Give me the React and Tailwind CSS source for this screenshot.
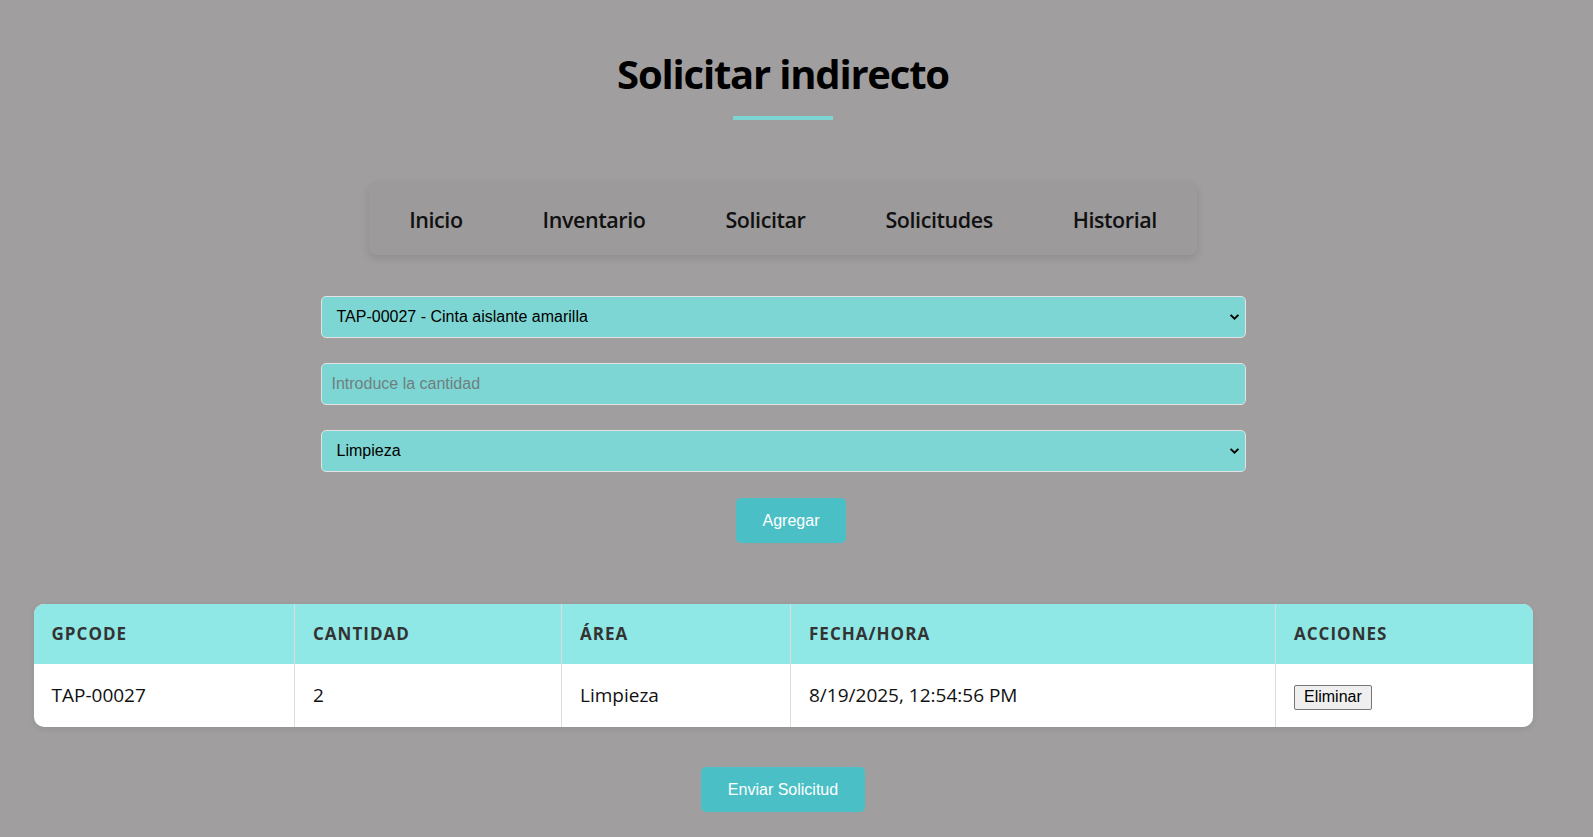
const NAV = ['Inicio', 'Inventario', 'Solicitar', 'Solicitudes', 'Historial'];

const ROWS = [
  { gpcode: 'TAP-00027', cantidad: 2, area: 'Limpieza', fecha: '8/19/2025, 12:54:56 PM' },
];

function Chevron() {
  return (
    <svg viewBox="0 0 12 8" className="absolute right-[5px] top-1/2 -translate-y-1/2 w-[11px] h-[7px]" fill="none">
      <path d="M1.5 1.5 L6 6 L10.5 1.5" stroke="#000" strokeWidth="2.2" />
    </svg>
  );
}

function Select({ value }) {
  return (
    <div className="relative w-full h-[42px] rounded-[5px] border border-[#e2e2e2] bg-[#7dd6d3] flex items-center pl-[15px] pr-10">
      <span className="text-[16px] text-black">{value}</span>
      <Chevron />
    </div>
  );
}

export default function App() {
  return (
    <div className="min-h-screen w-full bg-[#a09e9f] font-['Open_Sans',sans-serif]">
      <div className="w-[1566px] flex flex-col items-center pt-[50px] pb-6">
        {/* Encabezado */}
        <h1 className="text-[40px] leading-[48px] font-bold text-black tracking-[-0.03em]">Solicitar indirecto</h1>
        <div className="mt-[18px] w-[100px] h-[4px] bg-[#7dd6d3]" />

        {/* Navegación */}
        <nav className="mt-[63px] flex h-[72px] items-center rounded-lg bg-[#9c9a9b] shadow-[0_3px_8px_rgba(0,0,0,0.12)]">
          {NAV.map((item) => (
            <a key={item} href="#" className="px-10 pt-[3px] text-[21.5px] font-semibold text-[#111] tracking-[-0.02em]">
              {item}
            </a>
          ))}
        </nav>

        {/* Formulario */}
        <div className="mt-[41px] w-[925px] flex flex-col gap-[25px] font-['Liberation_Sans',Arial,sans-serif]">
          <Select value="TAP-00027 - Cinta aislante amarilla" />
          <input
            type="text"
            placeholder="Introduce la cantidad"
            className="w-full h-[42px] rounded-[5px] border border-[#e2e2e2] bg-[#7dd6d3] px-[10px] text-[16px] text-black placeholder:text-[#6f7f80] outline-none"
          />
          <Select value="Limpieza" />
        </div>

        <button className="mt-[26px] ml-4 h-[45px] w-[110px] rounded-[5px] bg-[#4bbfc6] text-white text-[16px] font-['Liberation_Sans',Arial,sans-serif]">
          Agregar
        </button>

        {/* Tabla */}
        <div className="mt-[61px] w-[1499px] rounded-[10px] overflow-hidden bg-white shadow-[0_2px_6px_rgba(0,0,0,0.08)]">
          <table className="w-full table-fixed border-collapse">
            <colgroup>
              <col className="w-[261px]" />
              <col className="w-[267px]" />
              <col className="w-[229px]" />
              <col className="w-[485px]" />
              <col className="w-[257px]" />
            </colgroup>
            <thead>
              <tr className="bg-[#8fe8e5] h-[60px]">
                {['GPCODE', 'CANTIDAD', 'ÁREA', 'FECHA/HORA', 'ACCIONES'].map((h, i) => (
                  <th
                    key={h}
                    className={`text-left px-[18px] text-[17px] font-bold text-[#333] tracking-[0.06em] ${i > 0 ? 'border-l border-[#dcdcdc]' : ''}`}
                  >
                    {h}
                  </th>
                ))}
              </tr>
            </thead>
            <tbody>
              {ROWS.map((r) => (
                <tr key={r.gpcode} className="h-[63px] text-[19px] text-[#111]">
                  <td className="px-[18px]">{r.gpcode}</td>
                  <td className="px-[18px] border-l border-[#dcdcdc]">{r.cantidad}</td>
                  <td className="px-[18px] border-l border-[#dcdcdc]">{r.area}</td>
                  <td className="px-[18px] border-l border-[#dcdcdc]">{r.fecha}</td>
                  <td className="px-[18px] border-l border-[#dcdcdc]">
                    <button className="h-[25px] px-[9px] rounded-[2px] border border-[#767676] bg-[#efefef] text-[16px] text-black leading-none font-['Liberation_Sans',Arial,sans-serif]">
                      Eliminar
                    </button>
                  </td>
                </tr>
              ))}
            </tbody>
          </table>
        </div>

        <button className="mt-[40px] h-[45px] w-[164px] rounded-[5px] bg-[#4bbfc6] text-white text-[16px] font-['Liberation_Sans',Arial,sans-serif]">
          Enviar Solicitud
        </button>
      </div>
    </div>
  );
}
